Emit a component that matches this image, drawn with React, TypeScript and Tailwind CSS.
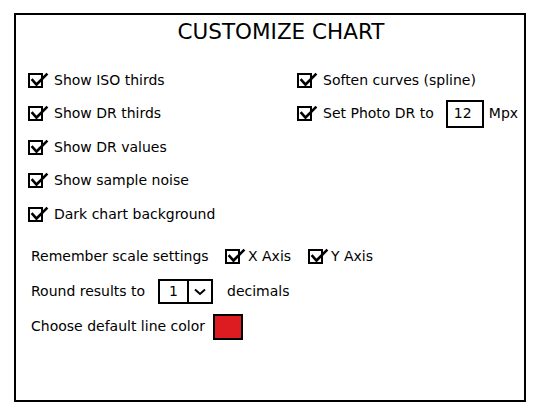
import React from "react";

const FONT = "font-['DejaVu_Sans',sans-serif]";

function Check({ tight = false }: { tight?: boolean }) {
  return (
    <svg
      width="26"
      height="17"
      viewBox="0 0 26 17"
      className={tight ? "-mr-[3px] shrink-0" : "shrink-0"}
    >
      <rect x="1" y="2" width="13" height="13" fill="white" stroke="black" strokeWidth="2" />
      <path d="M4.5 8 L8.5 12.5 L18.5 2.5" fill="none" stroke="black" strokeWidth="2.6" strokeLinecap="square" />
    </svg>
  );
}

function CheckRow({ label, children }: { label: string; children?: React.ReactNode }) {
  return (
    <div className="flex h-[33.5px] items-center">
      <Check />
      <span className="whitespace-nowrap">{label}</span>
      {children}
    </div>
  );
}

export default function App() {
  return (
    <div className={`min-h-[413px] w-[536px] bg-white pt-[13px] pl-[14px] text-[14px] text-black ${FONT}`}>
      <div className="flex h-[389px] w-[512px] flex-col border-2 border-black">
        {/* title */}
        <div className="mt-px flex h-[32px] items-center justify-center pl-[22px] text-[21.5px] leading-none">
          CUSTOMIZE CHART
        </div>

        {/* checkbox grid */}
        <div className="mt-[15.5px] flex pl-[12px]">
          <div className="flex w-[269px] flex-col">
            <CheckRow label="Show ISO thirds" />
            <CheckRow label="Show DR thirds" />
            <CheckRow label="Show DR values" />
            <CheckRow label="Show sample noise" />
            <CheckRow label="Dark chart background" />
          </div>
          <div className="flex flex-col">
            <CheckRow label="Soften curves (spline)" />
            <CheckRow label="Set Photo DR to">
              <div className="ml-[12px] flex h-[28px] w-[38px] items-center border-2 border-black pl-[6px]">
                12
              </div>
              <span className="ml-[5px]">Mpx</span>
            </CheckRow>
          </div>
        </div>

        {/* settings */}
        <div className="mt-[8px] flex flex-col pl-[15px]">
          <div className="flex h-[35px] items-center">
            <span className="w-[194px] whitespace-nowrap">Remember scale settings</span>
            <div className="flex w-[83px] items-center">
              <Check tight />
              <span>X Axis</span>
            </div>
            <div className="flex items-center">
              <Check tight />
              <span>Y Axis</span>
            </div>
          </div>
          <div className="flex h-[35px] items-center">
            <span className="w-[127px] whitespace-nowrap">Round results to</span>
            <div className="flex h-[25px] w-[55px] border-2 border-black">
              <div className="flex w-[29px] items-center border-r-2 border-black pl-[9px]">1</div>
              <div className="flex flex-1 items-center justify-center">
                <svg width="12" height="8" viewBox="0 0 12 8">
                  <path d="M1 1.5 L6 6 L11 1.5" fill="none" stroke="black" strokeWidth="2" />
                </svg>
              </div>
            </div>
            <span className="ml-[14px]">decimals</span>
          </div>
          <div className="flex h-[35px] items-center">
            <span className="w-[182px] whitespace-nowrap">Choose default line color</span>
            <div className="h-[26px] w-[30px] border-2 border-black bg-[#dc1c20]" />
          </div>
        </div>
      </div>
    </div>
  );
}
